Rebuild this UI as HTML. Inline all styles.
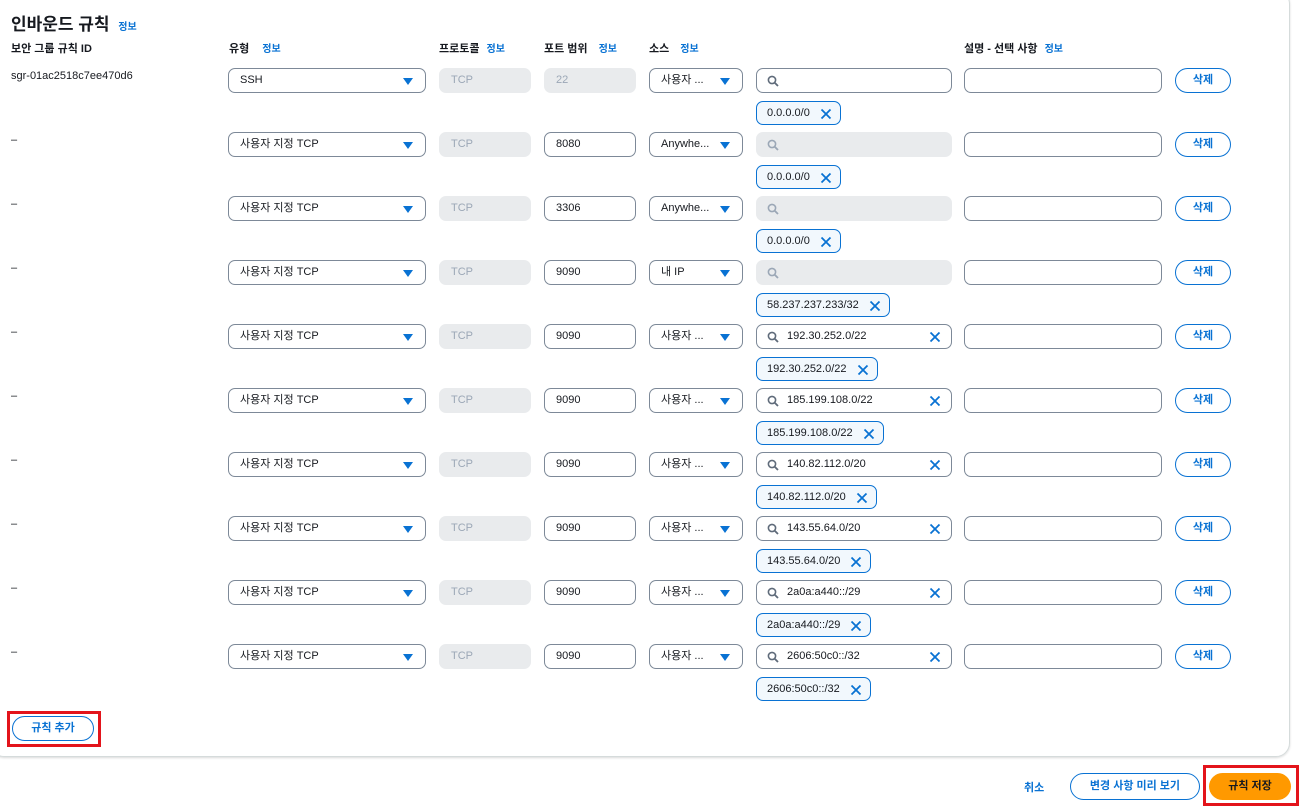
<!DOCTYPE html>
<html><head><meta charset="utf-8"><style>
*{box-sizing:border-box;margin:0;padding:0}
body{width:1300px;height:806px;background:#fff;font-family:"Liberation Sans","Noto Sans CJK KR",sans-serif;color:#16191f;position:relative;overflow:hidden;font-size:11px}
.card{position:absolute;left:-10px;top:-10px;width:1300px;height:767px;border:1px solid #d5dbdb;border-radius:14px;box-shadow:0 1px 2px rgba(0,0,0,.15)}
.abs{position:absolute}
h1{position:absolute;left:11px;top:10px;font-size:17px;font-weight:700;color:#16191f}
.info{color:#0972d3;font-size:10px;font-weight:700;margin-left:4px}
.hd{position:absolute;top:40px;font-size:11px;font-weight:700}
.row{position:absolute;left:0;width:1300px;height:64px}
.id{position:absolute;left:11px;top:2px;font-size:11px}
.box{position:absolute;top:0;height:25px;border:1px solid #7d8998;border-radius:7px;background:#fff;font-size:11px;line-height:23px;padding-left:11px;white-space:nowrap;overflow:hidden}
.dis{background:#e9ebed;border-color:#e9ebed;color:#9ba7b6}
.sel::after{content:"";position:absolute;right:12px;top:9px;border-left:5px solid transparent;border-right:5px solid transparent;border-top:7px solid #0972d3}
.srch{padding-left:30px}
.srch svg.m{position:absolute;left:10px;top:6px}
.srch svg.x{position:absolute;right:10px;top:6px}
.tag{position:absolute;left:756px;top:33px;height:24px;border:1px solid #0972d3;border-radius:7px;background:#f2f8fd;font-size:11px;line-height:22px;padding:0 30px 0 10px;white-space:nowrap}
.tag svg{position:absolute;right:8px;top:6px}
.del{position:absolute;left:1175px;top:0;width:56px;height:25px;border:1.5px solid #0972d3;border-radius:13px;color:#0972d3;font-weight:700;text-align:center;line-height:22px;font-size:11px}
.btn{position:absolute;border-radius:14px;font-weight:700;text-align:center;font-size:11px}
.red{position:absolute;border:3px solid #e3141b}
</style></head><body>
<div class="card"></div>
<h1>인바운드 규칙 <span class="info">정보</span></h1>
<div class="hd" style="left:11px">보안 그룹 규칙 ID</div>
<div class="hd" style="left:229px">유형 <span class="info" style="margin-left:10px">정보</span></div>
<div class="hd" style="left:439px">프로토콜 <span class="info">정보</span></div>
<div class="hd" style="left:544px">포트 범위 <span class="info" style="margin-left:8px">정보</span></div>
<div class="hd" style="left:649px">소스 <span class="info" style="margin-left:8px">정보</span></div>
<div class="hd" style="left:964px">설명 - 선택 사항 <span class="info">정보</span></div>

<svg width="0" height="0" style="position:absolute"><defs>
<symbol id="mg" viewBox="0 0 12 12"><circle cx="5" cy="5" r="3.6" fill="none" stroke="currentColor" stroke-width="1.6"/><path d="M7.6 7.6L11 11" stroke="currentColor" stroke-width="1.8"/></symbol>
<symbol id="xx" viewBox="0 0 12 12"><path d="M1.5 1.5L10.5 10.5M10.5 1.5L1.5 10.5" stroke="#0972d3" stroke-width="1.8"/></symbol>
</defs></svg>

<div class="row" style="top:68px">
<div class="id">sgr-01ac2518c7ee470d6</div>
<div class="box sel" style="left:228px;width:198px">SSH</div>
<div class="box dis" style="left:439px;width:92px">TCP</div>
<div class="box dis" style="left:544px;width:92px">22</div>
<div class="box sel" style="left:649px;width:94px">사용자 ...</div>
<div class="box srch" style="left:756px;width:196px;color:#5f6b7a"><svg class="m" width="12" height="12"><use href="#mg"/></svg></div>
<div class="box" style="left:964px;width:198px"></div>
<div class="del">삭제</div>
<div class="tag">0.0.0.0/0<svg width="12" height="12"><use href="#xx"/></svg></div>
</div>

<div class="row" style="top:132px">
<div class="id">–</div>
<div class="box sel" style="left:228px;width:198px">사용자 지정 TCP</div>
<div class="box dis" style="left:439px;width:92px">TCP</div>
<div class="box" style="left:544px;width:92px">8080</div>
<div class="box sel" style="left:649px;width:94px">Anywhe...</div>
<div class="box srch dis" style="left:756px;width:196px;color:#9ba7b6"><svg class="m" width="12" height="12"><use href="#mg"/></svg></div>
<div class="box" style="left:964px;width:198px"></div>
<div class="del">삭제</div>
<div class="tag">0.0.0.0/0<svg width="12" height="12"><use href="#xx"/></svg></div>
</div>

<div class="row" style="top:196px">
<div class="id">–</div>
<div class="box sel" style="left:228px;width:198px">사용자 지정 TCP</div>
<div class="box dis" style="left:439px;width:92px">TCP</div>
<div class="box" style="left:544px;width:92px">3306</div>
<div class="box sel" style="left:649px;width:94px">Anywhe...</div>
<div class="box srch dis" style="left:756px;width:196px;color:#9ba7b6"><svg class="m" width="12" height="12"><use href="#mg"/></svg></div>
<div class="box" style="left:964px;width:198px"></div>
<div class="del">삭제</div>
<div class="tag">0.0.0.0/0<svg width="12" height="12"><use href="#xx"/></svg></div>
</div>

<div class="row" style="top:260px">
<div class="id">–</div>
<div class="box sel" style="left:228px;width:198px">사용자 지정 TCP</div>
<div class="box dis" style="left:439px;width:92px">TCP</div>
<div class="box" style="left:544px;width:92px">9090</div>
<div class="box sel" style="left:649px;width:94px">내 IP</div>
<div class="box srch dis" style="left:756px;width:196px;color:#9ba7b6"><svg class="m" width="12" height="12"><use href="#mg"/></svg></div>
<div class="box" style="left:964px;width:198px"></div>
<div class="del">삭제</div>
<div class="tag">58.237.237.233/32<svg width="12" height="12"><use href="#xx"/></svg></div>
</div>

<div class="row" style="top:324px">
<div class="id">–</div>
<div class="box sel" style="left:228px;width:198px">사용자 지정 TCP</div>
<div class="box dis" style="left:439px;width:92px">TCP</div>
<div class="box" style="left:544px;width:92px">9090</div>
<div class="box sel" style="left:649px;width:94px">사용자 ...</div>
<div class="box srch" style="left:756px;width:196px;color:#5f6b7a"><svg class="m" width="12" height="12"><use href="#mg"/></svg><span style="color:#16191f">192.30.252.0/22</span><svg class="x" width="12" height="12"><use href="#xx"/></svg></div>
<div class="box" style="left:964px;width:198px"></div>
<div class="del">삭제</div>
<div class="tag">192.30.252.0/22<svg width="12" height="12"><use href="#xx"/></svg></div>
</div>

<div class="row" style="top:388px">
<div class="id">–</div>
<div class="box sel" style="left:228px;width:198px">사용자 지정 TCP</div>
<div class="box dis" style="left:439px;width:92px">TCP</div>
<div class="box" style="left:544px;width:92px">9090</div>
<div class="box sel" style="left:649px;width:94px">사용자 ...</div>
<div class="box srch" style="left:756px;width:196px;color:#5f6b7a"><svg class="m" width="12" height="12"><use href="#mg"/></svg><span style="color:#16191f">185.199.108.0/22</span><svg class="x" width="12" height="12"><use href="#xx"/></svg></div>
<div class="box" style="left:964px;width:198px"></div>
<div class="del">삭제</div>
<div class="tag">185.199.108.0/22<svg width="12" height="12"><use href="#xx"/></svg></div>
</div>

<div class="row" style="top:452px">
<div class="id">–</div>
<div class="box sel" style="left:228px;width:198px">사용자 지정 TCP</div>
<div class="box dis" style="left:439px;width:92px">TCP</div>
<div class="box" style="left:544px;width:92px">9090</div>
<div class="box sel" style="left:649px;width:94px">사용자 ...</div>
<div class="box srch" style="left:756px;width:196px;color:#5f6b7a"><svg class="m" width="12" height="12"><use href="#mg"/></svg><span style="color:#16191f">140.82.112.0/20</span><svg class="x" width="12" height="12"><use href="#xx"/></svg></div>
<div class="box" style="left:964px;width:198px"></div>
<div class="del">삭제</div>
<div class="tag">140.82.112.0/20<svg width="12" height="12"><use href="#xx"/></svg></div>
</div>

<div class="row" style="top:516px">
<div class="id">–</div>
<div class="box sel" style="left:228px;width:198px">사용자 지정 TCP</div>
<div class="box dis" style="left:439px;width:92px">TCP</div>
<div class="box" style="left:544px;width:92px">9090</div>
<div class="box sel" style="left:649px;width:94px">사용자 ...</div>
<div class="box srch" style="left:756px;width:196px;color:#5f6b7a"><svg class="m" width="12" height="12"><use href="#mg"/></svg><span style="color:#16191f">143.55.64.0/20</span><svg class="x" width="12" height="12"><use href="#xx"/></svg></div>
<div class="box" style="left:964px;width:198px"></div>
<div class="del">삭제</div>
<div class="tag">143.55.64.0/20<svg width="12" height="12"><use href="#xx"/></svg></div>
</div>

<div class="row" style="top:580px">
<div class="id">–</div>
<div class="box sel" style="left:228px;width:198px">사용자 지정 TCP</div>
<div class="box dis" style="left:439px;width:92px">TCP</div>
<div class="box" style="left:544px;width:92px">9090</div>
<div class="box sel" style="left:649px;width:94px">사용자 ...</div>
<div class="box srch" style="left:756px;width:196px;color:#5f6b7a"><svg class="m" width="12" height="12"><use href="#mg"/></svg><span style="color:#16191f">2a0a:a440::/29</span><svg class="x" width="12" height="12"><use href="#xx"/></svg></div>
<div class="box" style="left:964px;width:198px"></div>
<div class="del">삭제</div>
<div class="tag">2a0a:a440::/29<svg width="12" height="12"><use href="#xx"/></svg></div>
</div>

<div class="row" style="top:644px">
<div class="id">–</div>
<div class="box sel" style="left:228px;width:198px">사용자 지정 TCP</div>
<div class="box dis" style="left:439px;width:92px">TCP</div>
<div class="box" style="left:544px;width:92px">9090</div>
<div class="box sel" style="left:649px;width:94px">사용자 ...</div>
<div class="box srch" style="left:756px;width:196px;color:#5f6b7a"><svg class="m" width="12" height="12"><use href="#mg"/></svg><span style="color:#16191f">2606:50c0::/32</span><svg class="x" width="12" height="12"><use href="#xx"/></svg></div>
<div class="box" style="left:964px;width:198px"></div>
<div class="del">삭제</div>
<div class="tag">2606:50c0::/32<svg width="12" height="12"><use href="#xx"/></svg></div>
</div>

<div class="red" style="left:7px;top:711px;width:94px;height:36px"></div>
<div class="btn" style="left:12px;top:716px;width:82px;height:25px;border:1.5px solid #0972d3;color:#0972d3;line-height:22px">규칙 추가</div>

<div class="abs" style="left:1024px;top:779px;color:#0972d3;font-weight:700">취소</div>
<div class="btn" style="left:1070px;top:773px;width:130px;height:27px;border:1.5px solid #0972d3;color:#0972d3;line-height:24px">변경 사항 미리 보기</div>
<div class="red" style="left:1203px;top:765px;width:96px;height:41px"></div>
<div class="btn" style="left:1209px;top:773px;width:82px;height:27px;background:#ff9900;color:#16191f;line-height:27px">규칙 저장</div>
</body></html>
